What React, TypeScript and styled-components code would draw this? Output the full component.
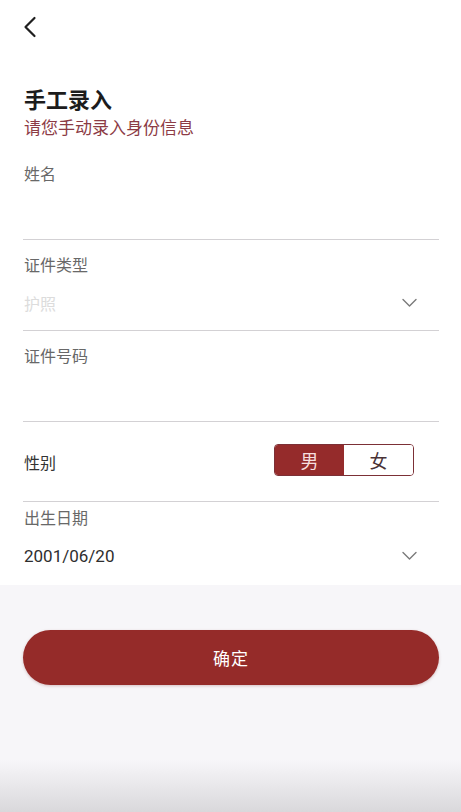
import React, { useState } from "react";
import styled, { createGlobalStyle } from "styled-components";

const GlobalStyle = createGlobalStyle`
  html, body {
    margin: 0;
    padding: 0;
    background: #f7f6f9;
  }
  body {
    font-family: "Noto Sans CJK SC", "Noto Sans", Roboto, sans-serif;
    -webkit-font-smoothing: antialiased;
  }
  * { box-sizing: border-box; }
`;

const Page = styled.div`
  width: 461px;
  min-height: 812px;
  display: flex;
  flex-direction: column;
  background: linear-gradient(
    to bottom,
    #f7f6f9 0px,
    #f7f6f9 760px,
    #e6e5e8 790px,
    #d9d8db 812px
  );
`;

const Card = styled.div`
  background: #ffffff;
  display: flex;
  flex-direction: column;
  padding: 0 22px 2px 23px;
`;

const Header = styled.div`
  height: 54px;
  display: flex;
  align-items: center;
`;

const BackButton = styled.button`
  border: none;
  background: transparent;
  padding: 0;
  width: 20px;
  height: 24px;
  display: flex;
  align-items: center;
  cursor: pointer;
`;

const TitleBlock = styled.div`
  margin-top: 29px;
  margin-bottom: 10px;
  display: flex;
  flex-direction: column;
  gap: 2px;
  padding-left: 1px;
`;

const Title = styled.h1`
  margin: 0;
  font-size: 22px;
  line-height: 30px;
  font-weight: 700;
  color: #1c1c1c;
`;

const Subtitle = styled.div`
  font-size: 17px;
  line-height: 24px;
  color: #8c3b45;
`;

const Field = styled.div<{ $top?: number; $last?: boolean }>`
  display: flex;
  flex-direction: column;
  padding-top: ${(p) => (p.$top ?? 12)}px;
  border-bottom: ${(p) => (p.$last ? "none" : "1px solid #d3d1d4")};
`;

const Label = styled.div`
  font-size: 16px;
  line-height: 24px;
  color: #686868;
  padding-left: 1px;
`;

const ValueRow = styled.div`
  height: 54px;
  display: flex;
  align-items: center;
  justify-content: space-between;
  padding-left: 1px;
  padding-right: 22px;
`;

const Value = styled.span<{ $placeholder?: boolean }>`
  font-size: ${(p) => (p.$placeholder ? 16 : 17)}px;
  color: ${(p) => (p.$placeholder ? "#dcdcdc" : "#2e2e2e")};
  font-family: Roboto, "Noto Sans CJK SC", sans-serif;
`;

const InlineRow = styled.div`
  height: 80px;
  display: flex;
  align-items: center;
  justify-content: space-between;
  border-bottom: 1px solid #d3d1d4;
  padding-left: 1px;
  padding-right: 25px;
  padding-bottom: 3px;
`;

const InlineLabel = styled.div`
  font-size: 16px;
  line-height: 24px;
  color: #333333;
  margin-top: 3px;
`;

const Toggle = styled.div`
  width: 140px;
  height: 32px;
  display: flex;
  border: 1.5px solid #7c3036;
  border-radius: 4px;
  overflow: hidden;
`;

const ToggleOption = styled.button<{ $active: boolean }>`
  flex: 1;
  border: none;
  margin: 0;
  padding: 0;
  font-family: "Noto Sans CJK SC", sans-serif;
  font-size: 18px;
  line-height: 28px;
  cursor: pointer;
  background: ${(p) => (p.$active ? "#952b2b" : "#ffffff")};
  color: ${(p) => (p.$active ? "#f6dede" : "#4a3236")};
`;

const Footer = styled.div`
  padding: 45px 22px 0 23px;
`;

const SubmitButton = styled.button`
  width: 100%;
  height: 55px;
  border: none;
  border-radius: 28px;
  background: #952b29;
  color: #ffffff;
  font-family: "Noto Sans CJK SC", sans-serif;
  font-size: 17px;
  letter-spacing: 1px;
  box-shadow: 0 1px 3px rgba(120, 30, 30, 0.25);
  cursor: pointer;
`;

const Chevron = () => (
  <svg width="15" height="10" viewBox="0 0 15 10" fill="none">
    <path d="M1 1.5 L7.5 8 L14 1.5" stroke="#7a7a7a" strokeWidth="1.4" strokeLinecap="round" strokeLinejoin="round" />
  </svg>
);

const BackIcon = () => (
  <svg width="14" height="22" viewBox="0 0 14 22" fill="none">
    <path d="M11.5 2 L2.5 11 L11.5 20" stroke="#1f1f1f" strokeWidth="2.2" strokeLinecap="round" strokeLinejoin="round" />
  </svg>
);

export default function App() {
  const [gender, setGender] = useState<"male" | "female">("male");
  return (
    <>
      <GlobalStyle />
      <Page>
        <Card>
          <Header>
            <BackButton aria-label="返回">
              <BackIcon />
            </BackButton>
          </Header>
          <TitleBlock>
            <Title>手工录入</Title>
            <Subtitle>请您手动录入身份信息</Subtitle>
          </TitleBlock>

          <Field>
            <Label>姓名</Label>
            <ValueRow />
          </Field>

          <Field>
            <Label>证件类型</Label>
            <ValueRow>
              <Value $placeholder>护照</Value>
              <Chevron />
            </ValueRow>
          </Field>

          <Field>
            <Label>证件号码</Label>
            <ValueRow />
          </Field>

          <InlineRow>
            <InlineLabel>性别</InlineLabel>
            <Toggle>
              <ToggleOption $active={gender === "male"} onClick={() => setGender("male")}>
                男
              </ToggleOption>
              <ToggleOption $active={gender === "female"} onClick={() => setGender("female")}>
                女
              </ToggleOption>
            </Toggle>
          </InlineRow>

          <Field $top={3} $last>
            <Label>出生日期</Label>
            <ValueRow>
              <Value>2001/06/20</Value>
              <Chevron />
            </ValueRow>
          </Field>
        </Card>
        <Footer>
          <SubmitButton>确定</SubmitButton>
        </Footer>
      </Page>
    </>
  );
}
